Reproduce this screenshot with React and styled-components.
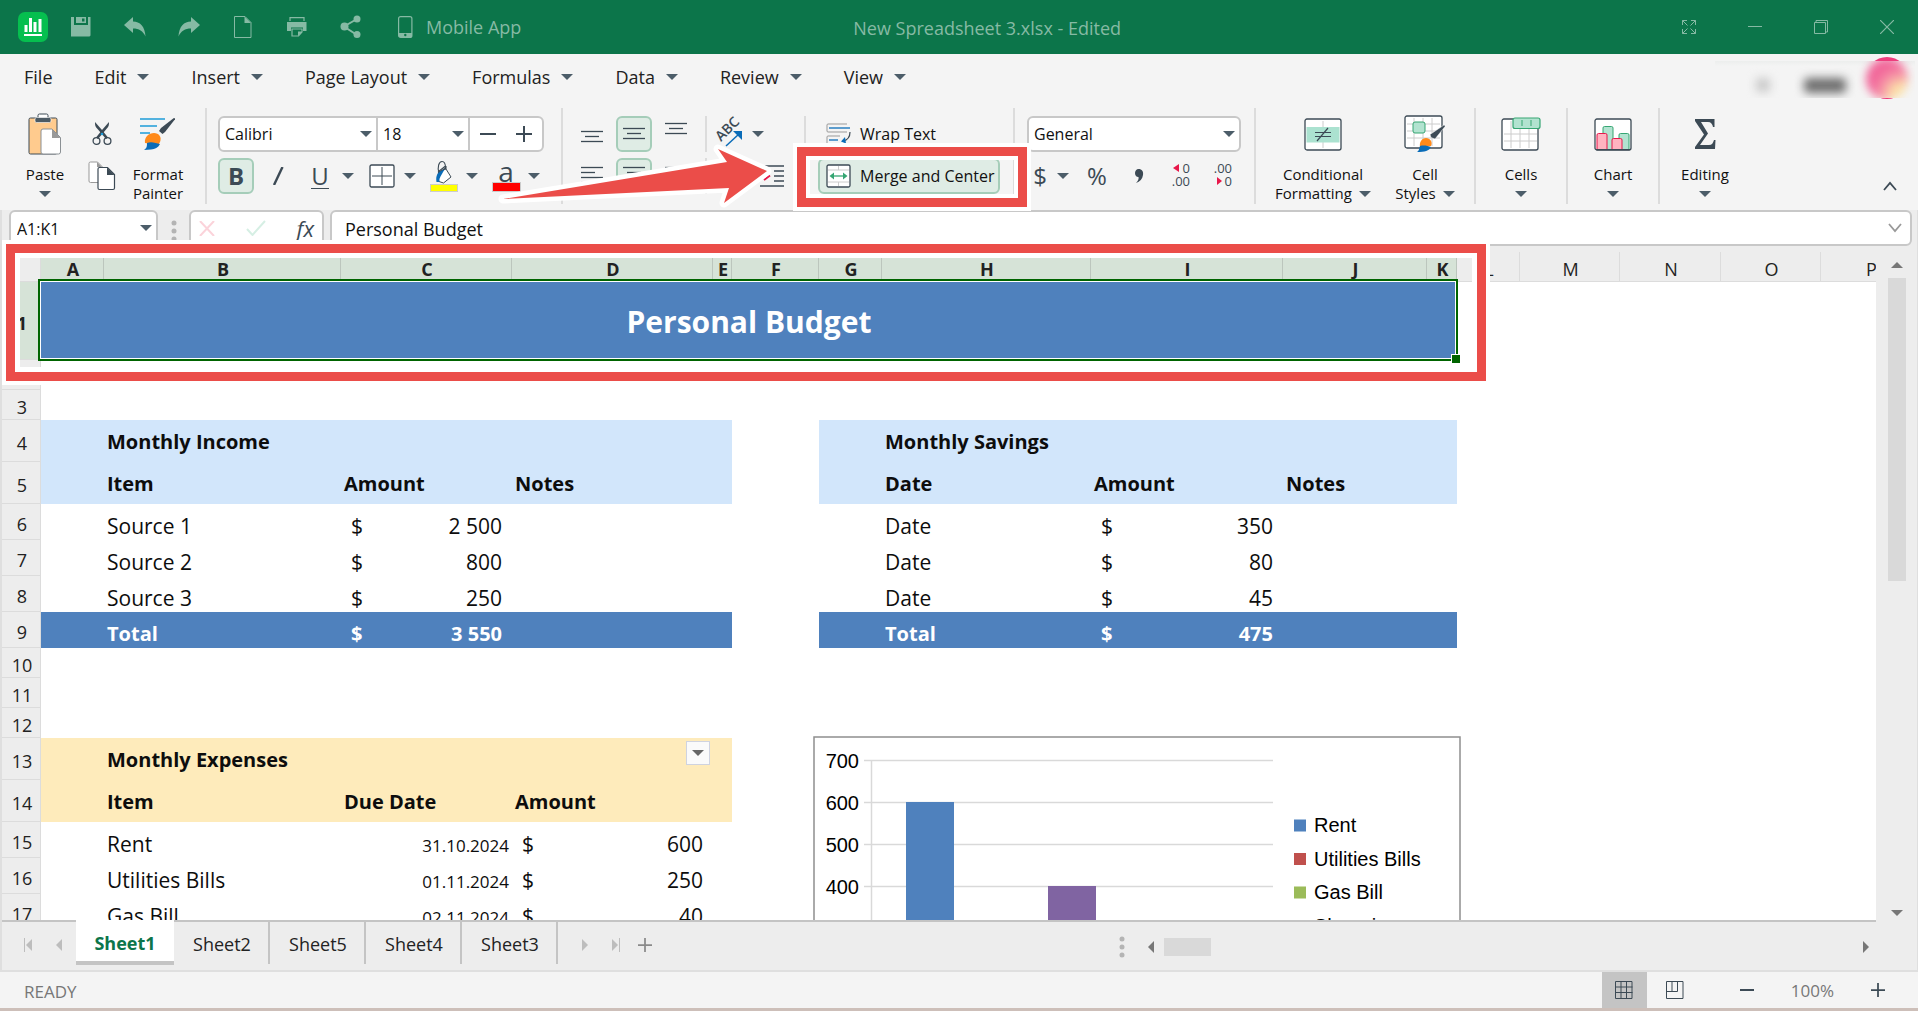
import React from 'react'
import styled, { createGlobalStyle, css } from 'styled-components'

const GlobalStyle = createGlobalStyle`
* {
  box-sizing: border-box;
}

body {
  margin: 0;
  font-family: 'Open Sans', 'Noto Sans', sans-serif;
  font-size: 18px;
  color: #222;
}

button, input, select {
  margin: 0;
  padding: 0;
  border: none;
  background: none;
  font-family: inherit;
  font-size: inherit;
  color: inherit;
  outline: none;
}

svg {
  display: block;
  flex-shrink: 0;
}
`

const Page = styled.div`
display: flex;
flex-direction: column;
height: 100vh;
overflow: hidden;
background-color: #f4f4f4;
`

/* ---------- title bar ---------- */

const TitleBar = styled.header`
display: flex;
align-items: center;
height: 54px;
flex-shrink: 0;
padding: 0 11px 0 18px;
background-color: #0c754a;
color: #86baa4;
`

const QuickTools = styled.div`
display: flex;
align-items: center;
gap: 24px;
padding-left: 18px;
`

const QuickButton = styled.button`
display: flex;
align-items: center;
justify-content: center;
width: 30px;
height: 34px;
`

const MobileLink = styled.a`
display: flex;
align-items: center;
gap: 13px;
padding-left: 8px;
color: inherit;
text-decoration: none;
`

const DocTitle = styled.h1`
flex: 1;
margin: 0;
padding: 2px 216px 0 0;
font-size: 18px;
font-weight: 400;
text-align: center;
`

const WindowButtons = styled.div`
display: flex;
gap: 26px;
`

const WindowButton = styled(QuickButton)`
width: 40px;
`

/* ---------- menu ---------- */

const MenuBar = styled.nav`
display: flex;
align-items: center;
height: 46px;
flex-shrink: 0;
padding-left: 24px;
gap: 42px;
`

const MenuItem = styled.button`
display: flex;
align-items: center;
gap: 11px;
line-height: 28px;
`

const Account = styled.div`
position: relative;
align-self: stretch;
margin-left: auto;
padding: 7px 3px 0 0;
`

const avatarShape = css`
position: absolute;
width: 42px;
height: 42px;
border-radius: 50%;
`

const Avatar = styled.span`
${avatarShape}
top: 3px;
right: 10px;
background-color: #ee3d7d;
`

const Hidden = styled.div`
position: relative;
display: flex;
width: 200px;
height: 37px;
overflow: hidden;
background: linear-gradient(#eceeed, #f4f4f4 5px);
`

const Smudge = styled.span`
width: ${({ wide }) => wide ? '42px' : '14px'};
height: ${({ wide }) => wide ? '15px' : '14px'};
margin: 17px 0 0 ${({ wide }) => wide ? '34px' : '41px'};
border-radius: 4px;
background-color: ${({ wide }) => wide ? '#6e6e6e' : '#c9c9c9'};
filter: blur(5px);
`

const AvatarHaze = styled.span`
${avatarShape}
top: -3px;
right: 7px;
background: radial-gradient(circle at 85% 88%, #fbe3a8 0, #fbdfa8 18%, #f58fa6 42%, #f2699b 60%, #ee5f95 100%);
filter: blur(4px);
`

/* ---------- ribbon ---------- */

const Ribbon = styled.div`
display: flex;
height: 110px;
flex-shrink: 0;
padding-top: 8px;
font-size: 15px;
color: #111;
`

const Group = styled.div`
display: flex;
height: ${({ short }) => short ? '36px' : '96px'};
margin-top: ${({ short }) => short ? '8px' : '0'};
padding: ${({ pad }) => pad || '0'};
gap: ${({ gap }) => gap || '0'};
border-right: ${({ last }) => last ? 'none' : '2px solid #dcdcdc'};
`

const Stack = styled.div`
display: flex;
flex-direction: column;
gap: 6px;
padding-top: 8px;
`

const Line = styled.div`
display: flex;
align-items: center;
gap: 6px;
height: 36px;
`

const Divider = styled.span`
width: 2px;
height: 36px;
margin: 0 -1px 0 5px;
background-color: #dcdcdc;
`

const activeTool = css`
border: 2px solid #a5cdb9;
background-color: #dfece5;
`

const toolWidths = { narrow: '26px', normal: '36px', wide: '60px' }

const ToolButton = styled.button`
display: flex;
align-items: center;
justify-content: center;
width: ${({ size }) => toolWidths[size || 'normal']};
height: 36px;
border-radius: 6px;
flex-shrink: 0;
font-size: 24px;
line-height: 28px;
color: #3c4a55;
${({ active }) => active && activeTool}
`

const BoldMark = styled.b`
font-size: 24px;
font-weight: 700;
`

const Split = styled.div`
display: flex;
`

const CaretButton = styled.button`
display: flex;
align-items: center;
justify-content: center;
width: 20px;
height: 36px;
`

const TallButton = styled.button`
display: flex;
flex-direction: column;
align-items: center;
width: ${({ w }) => w}px;
padding-top: 4px;
line-height: 19px;
`

const TallIcon = styled.span`
display: flex;
align-items: center;
justify-content: center;
height: 44px;
margin-bottom: 9px;
`

const TallCaret = styled.span`
display: flex;
align-items: center;
gap: 7px;
height: 19px;
`

const WideButton = styled.button`
display: flex;
align-items: center;
gap: 9px;
width: 182px;
height: 36px;
padding: ${({ active }) => active ? '0 6px' : '0 8px'};
border-radius: 6px;
font-size: 16px;
white-space: nowrap;
${({ active }) => active && activeTool}
`

const FontFields = styled.div`
display: flex;
width: 326px;
height: 36px;
border: 2px solid #c8c8c8;
border-radius: 6px;
background-color: #fff;
`

const SelectBox = styled.label`
position: relative;
display: flex;
align-items: center;
width: ${({ w }) => w}px;
height: 100%;
border-right: ${({ last }) => last ? 'none' : '2px solid #c8c8c8'};

& > svg {
  position: absolute;
  right: 4px;
  pointer-events: none;
}
`

const Select = styled.select`
width: 100%;
height: 100%;
padding-left: 5px;
appearance: none;
font-size: 16px;
color: #111;
`

const NumberFormat = styled.div`
width: 214px;
height: 36px;
border: 2px solid #c8c8c8;
border-radius: 6px;
background-color: #fff;
`

const StepButton = styled.button`
display: flex;
flex: 1;
align-items: center;
justify-content: center;
`

const CollapseButton = styled.button`
align-self: flex-start;
margin: 73px 21px 0 auto;
`

/* ---------- callouts drawn over the window ---------- */

const MergeAnchor = styled.div`
position: relative;
`

const MergeFrame = styled.span`
position: absolute;
inset: -11px -27px -13px -21px;
border: 9px solid #eb4d49;
box-shadow: 0 0 0 4px #fff, inset 0 0 0 4px #fff;
z-index: 2;
pointer-events: none;
`

const ArrowSvg = styled.svg`
position: absolute;
left: -323px;
top: -18px;
z-index: 2;
pointer-events: none;
`

const RangeFrame = styled.span`
position: absolute;
left: 4px;
top: -2px;
width: 1480px;
height: 137px;
border: 9px solid #eb4d49;
box-shadow: 0 0 0 4px #fff, inset 0 0 0 5px #fff;
z-index: 3;
pointer-events: none;
`

/* ---------- formula bar ---------- */

const Workbook = styled.main`
display: flex;
flex-direction: column;
flex: 1;
min-height: 0;
border-left: 2px solid #dfdfdf;
border-right: 1px solid #dfdfdf;
background-color: #ededed;
`

const FormulaBar = styled.div`
display: flex;
height: 36px;
flex-shrink: 0;
padding: 0 5px 0 7px;
`

const Box = styled.div`
display: flex;
align-items: center;
border: 2px solid #c8c8c8;
border-radius: 6px;
background-color: #fff;
`

const NameBox = styled(Box)`
width: 149px;
padding: 0 4px 0 6px;
`

const FormulaTools = styled(Box)`
justify-content: space-between;
width: 135px;
padding: 0 8px;
`

const FormulaBox = styled(Box)`
flex: 1;
margin-left: 6px;
padding: 0 8px 0 13px;
`

const BoxInput = styled.input`
flex: 1;
min-width: 0;
height: 28px;
padding-top: 1px;
font-size: ${({ small }) => small ? '16px' : '18px'};
color: #111;
`

const Grip = styled.span`
display: flex;
justify-content: center;
padding-top: 10px;
width: 31px;
`

/* ---------- sheet ---------- */

const SheetArea = styled.div`
position: relative;
display: flex;
flex: 1;
min-height: 0;
`

const SheetColumn = styled.div`
display: flex;
flex-direction: column;
flex: 1;
min-width: 0;
`

const Viewport = styled.div`
position: relative;
flex: 1;
min-height: 0;
overflow: hidden;
padding-top: 6px;
`

const Grid = styled.table`
width: 1919px;
table-layout: fixed;
border-collapse: separate;
border-spacing: 0;
background-color: #fff;
font-size: 21px;
color: #0d0d0d;
`

const Row = styled.tr`
height: ${({ h }) => h}px;
`

const HeadCell = styled.th`
padding: 4px 0 0 2px;
font-size: 18px;
line-height: 24px;
font-weight: ${({ picked }) => picked ? 700 : 400};
background-color: ${({ picked }) => picked ? '#d6e3d7' : '#ededed'};
border-right: 1px solid ${({ picked }) => picked ? '#bcc6bd' : '#dcdcdc'};
border-bottom: 1px solid #dcdcdc;
color: #222;
`

const fills = {
  head: '#d2e6fb',
  total: '#4f81bd',
  expense: '#feebbb',
}

const Cell = styled.td`
position: relative;
padding: ${({ middle }) => middle ? '2px' : '0'} ${({ money }) => money ? '10px' : '3px'} 0;
font-size: ${({ strong }) => strong ? '20px' : '21px'};
line-height: 28px;
white-space: nowrap;
vertical-align: ${({ middle }) => middle ? 'middle' : 'bottom'};
font-weight: ${({ strong }) => strong ? 700 : 400};
color: ${({ fill }) => fill === 'total' ? '#fff' : 'inherit'};
background-color: ${({ fill }) => fills[fill] || '#fff'};
`

const TitleCell = styled.td`
position: relative;
padding: 2px 0 0;
background-color: #4f81bd;
color: #fff;
font-size: 30px;
font-weight: 700;
line-height: 42px;
text-align: center;

&::before {
  content: '';
  position: absolute;
  inset: -3px -1px -1px -3px;
  border: 2px solid #006400;
  box-shadow: inset 0 0 0 1px #fff;
  z-index: 1;
}

&::after {
  content: '';
  position: absolute;
  right: -4px;
  bottom: -4px;
  width: 8px;
  height: 8px;
  border: 1px solid #fff;
  background-color: #006400;
  z-index: 1;
}
`

const Money = styled.span`
display: flex;
justify-content: space-between;
`

const DateText = styled.span`
display: block;
font-size: 17px;
line-height: 24px;
text-align: right;
`

const FilterButton = styled.button`
position: absolute;
top: 3px;
right: 3px;
display: flex;
align-items: center;
justify-content: center;
width: 24px;
height: 24px;
border: 1px solid #cfd3e0;
background-color: #fafafa;
`

const ChartSvg = styled.svg`
position: absolute;
left: 811px;
top: 490px;
font-family: 'Liberation Sans', Arial, sans-serif;
font-size: 20px;
`

const ScrollColumn = styled.div`
display: flex;
flex-direction: column;
align-items: center;
width: 41px;
padding: 16px 0 54px;
`

const VThumb = styled.div`
width: 18px;
height: 303px;
margin: 10px 0 auto;
background-color: #d9d9d9;
`

/* ---------- sheet tabs ---------- */

const TabBar = styled.div`
display: flex;
align-items: flex-start;
height: 50px;
flex-shrink: 0;
border-top: 2px solid #c4c4c4;
`

const TabNav = styled.div`
display: flex;
align-items: center;
height: 46px;
padding: 0 ${({ start }) => start ? '2px 0 12px' : '0 0 12px'};
`

const NavButton = styled.button`
display: flex;
align-items: center;
justify-content: center;
width: 30px;
height: 30px;
`

const Tab = styled.button`
width: 96px;
height: 42px;
padding: 2px 0 0 2px;
border-right: 2px solid #c4c4c4;
color: #222;
${({ active }) => active && css`
width: 98px;
height: 45px;
margin-top: -2px;
padding: 5px 0 0;
border-right: none;
border-bottom: 4px solid #c4c4c4;
background-color: #fff;
color: #0c754a;
font-weight: 700;
`}
`

const HScroll = styled.div`
display: flex;
align-items: center;
width: 757px;
height: 50px;
margin-left: auto;
padding-right: 4px;
`

const ScrollLeft = styled.button`
margin: 0 7px 0 20px;
`

const HThumb = styled.div`
width: 47px;
height: 18px;
margin-right: auto;
background-color: #d9d9d9;
`

const StatusBar = styled.footer`
display: flex;
align-items: center;
height: 41px;
flex-shrink: 0;
padding-right: 33px;
border-top: 2px solid #dfdfdf;
border-bottom: 3px solid #cdbfb9;
`

const Ready = styled.span`
flex: 1;
padding: 2px 0 0 24px;
font-size: 17px;
color: #777;
`

const ViewButton = styled.button`
display: flex;
align-items: center;
justify-content: center;
width: 45px;
height: 36px;
margin-right: 6px;
background-color: ${({ active }) => active ? '#c4c4c4' : 'transparent'};
`

const Zoom = styled.div`
display: flex;
align-items: center;
gap: 37px;
padding-left: 36px;
font-size: 17px;
color: #777;
`

/* ---------- icons ---------- */

const INK = '#3c4a55'

const Caret = ({ size = 12, color = '#4c5d69' }) => (
  <svg width={size} height={size / 2} viewBox="0 0 12 6"><path d="M0 0h12L6 6z" fill={color} /></svg>
)

const Triangle = ({ dir, bar, color = '#bdbdbd' }) => (
  <svg width="12" height="16" viewBox="0 0 12 16" transform={dir === 'right' ? 'scale(-1 1)' : undefined}>
    <path d="M9 2v12L3 8z" fill={color} />
    {bar && <path d="M1.5 1v14" stroke={color} strokeWidth="1" />}
  </svg>
)

const Dots = () => (
  <svg width="6" height="22" viewBox="0 0 6 22" fill="#b4b4b4">
    <circle cx="3" cy="3" r="2.5" /><circle cx="3" cy="11" r="2.5" /><circle cx="3" cy="19" r="2.5" />
  </svg>
)

const Plus = ({ size = 16, color = INK, w = 2 }) => (
  <svg width={size} height={size} viewBox="0 0 16 16"><path d="M8 0v16M0 8h16" stroke={color} strokeWidth={w} /></svg>
)

const Minus = ({ size = 16 }) => (
  <svg width={size} height="16" viewBox="0 0 16 16" preserveAspectRatio="none"><path d="M0 8h16" stroke={INK} strokeWidth="2" /></svg>
)

const Logo = () => (
  <svg width="30" height="30" viewBox="0 0 30 30">
    <rect width="30" height="30" rx="7" fill="#06bf4f" />
    <path d="M8 13v7M12.500 6v14M17 10v10M22 7v13" stroke="#fff" strokeWidth="3" />
    <path d="M6 23h18" stroke="#fff" strokeWidth="2" />
  </svg>
)

const SaveIcon = () => (
  <svg width="20" height="20" viewBox="0 0 20 20" fill="currentColor">
    <path d="M0 0h3v8h14V0h2.500v18.500l-1 1H0z" /><path d="M5 0h10v6H5zM11 1.500v3h2.500v-3z" fillRule="evenodd" />
  </svg>
)

const UndoIcon = ({ flip }) => (
  <svg width="22" height="20" viewBox="0 0 22 20" transform={flip ? 'scale(-1 1)' : undefined}>
    <path d="M0 8 9 0v4.500c7 0 12 5 12.500 15C19 14 15 11.500 9 11.500V16z" fill="currentColor" />
  </svg>
)

const NewIcon = () => (
  <svg width="18" height="22" viewBox="0 0 18 22">
    <path d="M.5.500h10.500l6 6v15H.5z" fill="none" stroke="currentColor" /><path d="M10.500.500l6.500 6.500h-6.500z" fill="currentColor" />
  </svg>
)

const PrintIcon = () => (
  <svg width="20" height="20" viewBox="0 0 20 20">
    <path d="M3 4V.600h14V4" fill="none" stroke="currentColor" strokeWidth="1.200" />
    <path d="M0 5h19.500v9H16v-3.500H4V14H0z" fill="currentColor" />
    <path d="M5 12h10v3l-3.500 4H5z" fill="none" stroke="currentColor" strokeWidth="1.200" /><path d="M15 14.500l-4 4.500v-4.500z" fill="currentColor" />
  </svg>
)

const ShareIcon = () => (
  <svg width="22" height="24" viewBox="0 0 22 24">
    <path d="M17 4 4 11.500 17 20" fill="none" stroke="currentColor" strokeWidth="2" />
    <g fill="currentColor"><circle cx="17" cy="4" r="3.500" /><circle cx="4.500" cy="11.500" r="4" /><circle cx="17" cy="19.500" r="3.500" /></g>
  </svg>
)

const PhoneIcon = () => (
  <svg width="15" height="22" viewBox="0 0 15 22">
    <rect x=".6" y=".6" width="13.300" height="20.800" rx="2" fill="none" stroke="currentColor" strokeWidth="1.200" />
    <path d="M1 17h13v4H1z" fill="currentColor" /><circle cx="7.300" cy="19" r="1.200" fill="#0c754a" />
  </svg>
)

const ExpandIcon = () => (
  <svg width="14" height="14" viewBox="0 0 14 14" fill="none" stroke="currentColor">
    <path d="M.5 5V.500H5M9 .500h4.500V5M13.500 9v4.500H9M5 13.500H.5V9M.5.500l5 5M13.500.500l-5 5M13.500 13.500l-5-5M.5 13.500l5-5" />
  </svg>
)

const RestoreIcon = () => (
  <svg width="14" height="14" viewBox="0 0 14 14" fill="none" stroke="currentColor">
    <path d="M.5 2.500h11v11H.5zM2 2.500v-2h11.500V12h-2" />
  </svg>
)

const CloseIcon = () => (
  <svg width="14" height="14" viewBox="0 0 14 14"><path d="M0 0l14 14M14 0 0 14" stroke="currentColor" strokeWidth="1.200" /></svg>
)

const PasteIcon = () => (
  <svg width="34" height="42" viewBox="0 0 34 42">
    <rect x="1" y="5" width="28" height="36" rx="1.500" fill="#ffcb8e" stroke={INK} />
    <path d="M10 5V2.500Q10 1 11.500 1h7Q20 1 20 2.500V5" fill="#fff" stroke={INK} />
    <rect x="7" y="4.500" width="16" height="5" rx="1.500" fill="#4c5a64" stroke="#fff" strokeWidth=".6" />
    <path d="M13 18q0-2 2-2h9l8.500 8.500V39q0 2-2 2H15q-2 0-2-2z" fill="#fff" stroke="#8b9094" />
    <path d="M24 16l8.500 9H24z" fill="#999" />
  </svg>
)

const CutIcon = () => (
  <svg width="20" height="24" viewBox="0 0 20 24">
    <path d="M3 0c0 4 .500 5 3 7.500L14 17l2-1.500L10 8z" fill={INK} /><path d="M17 0c0 4-.5 5-3 7.500L6 17l-2-1.500L10 8z" fill={INK} />
    <circle cx="10" cy="12" r="1.300" fill="#1e9cd8" />
    <circle cx="4.500" cy="19" r="3.400" fill="none" stroke={INK} strokeWidth="1.300" /><circle cx="15.500" cy="19" r="3.400" fill="none" stroke={INK} strokeWidth="1.300" />
  </svg>
)

const CopyIcon = () => (
  <svg width="28" height="30" viewBox="0 0 28 30">
    <path d="M1 2.500Q1 1 2.500 1h7l5 5v15.500H2.500Q1 21.500 1 20z" fill="#fff" stroke="#999" /><path d="M9 1l5 5H9z" fill="#999" />
    <path d="M10 8q0-1.500 1.500-1.500h8l7 7V27q0 1.500-1.500 1.500H11.500Q10 28.500 10 27z" fill="#fff" stroke={INK} strokeWidth="1.200" />
    <path d="M19 6.500l7.500 7.500H19z" fill={INK} />
  </svg>
)

const PainterIcon = () => (
  <svg width="36" height="34" viewBox="0 0 36 34">
    <path d="M0 2h25M0 9h17M0 16h10" stroke="#1e9cd8" strokeWidth="1.300" />
    <path d="M33.500 1.200q1.500-.5 1.500 1L25 15l-2.500 2-3.500-3 2-3z" fill={INK} />
    <path d="M5 26c-1-6 4-10 9-10 5 0 8 4 6 9-1 2-2 3-2 3z" fill="#ff8a1b" />
    <path d="M4 33c3-2 3-4 3-7 4-2 9 0 13 1-2 4-5 5-9 5.500z" fill="#0a6cb8" />
  </svg>
)

const BordersIcon = () => (
  <svg width="26" height="24" viewBox="0 0 26 24">
    <rect x="1" y="1" width="24" height="22" rx="1.500" fill="#fff" stroke={INK} strokeWidth="1.300" />
    <path d="M3 12h20M13 3v18" stroke={INK} />
  </svg>
)

const FillIcon = () => (
  <svg width="28" height="33" viewBox="0 0 28 33">
    <path d="M8.500 12 16 9l5 8-7.500 6-6-2z" fill="#fff" stroke={INK} />
    <path d="M9 13C7 7 9 1.500 12 1.500c2.500 0 3.500 3 3.500 6.500L9 13M8 12l7.500-6M16 9V6" fill="none" stroke={INK} strokeWidth="1.100" />
    <path d="M6.500 22c-1-7 1-10 8-12.500l-4 7q-1.500 2-1 5.500z" fill="#0a6cb8" />
    <rect x=".5" y="24.500" width="27" height="7" fill="#ff0" stroke="#ccc" />
  </svg>
)

const FontColorMark = styled.span`
display: flex;
flex-direction: column;
align-items: center;
font-size: 28px;
font-weight: 500;
line-height: 22px;

&::after {
  content: '';
  width: 27px;
  height: 8px;
  border: 1px solid #ccc;
  background-color: #f00;
}
`

// widths of the text lines, top to bottom, at 5px pitch
const LinesIcon = ({ rows, side = 'middle', top = 0 }) => (
  <svg width="22" height="24" viewBox="0 0 22 24">
    {rows.map((w, i) => {
      const x = side === 'left' ? 0 : side === 'right' ? 22 - w : (22 - w) / 2
      return <path key={i} d={`M${x} ${top + 1.5 + i * 5}h${w}`} stroke={INK} strokeWidth="1.300" />
    })}
  </svg>
)

const IndentIcon = ({ back }) => (
  <svg width="24" height="24" viewBox="0 0 24 24">
    <path d="M0 2h24M14 7h10M14 12h10M14 17h10M0 22h24" stroke={INK} strokeWidth="1.300" />
    <path d={back ? 'M12 12H2M6 8l-4 4 4 4' : 'M4 16l6-4.500'} fill="none" stroke="#e8174a" strokeWidth="2" />
  </svg>
)

const OrientIcon = () => (
  <svg width="36" height="36" viewBox="0 0 36 36">
    <text x="0" y="0" transform="translate(9 26) rotate(-45)" fontSize="14" fontWeight="600" fill={INK}>ABC</text>
    <path d="M14 30 27 18" stroke="#0a6cb8" strokeWidth="1.500" /><path d="M21 15h9v9z" fill="#0a6cb8" />
  </svg>
)

const WrapIcon = () => (
  <svg width="25" height="22" viewBox="0 0 25 22" fill="none">
    <path d="M21 1H2Q1 1 1 2v6q0 1 1 1h19" stroke="#999" /><path d="M3 5h21" stroke="#0a6cb8" strokeWidth="1.300" />
    <path d="M14 13H2q-1 0-1 1v6q0 1 1 1h12" stroke="#999" /><path d="M3 17h9" stroke="#0a6cb8" strokeWidth="1.300" />
    <path d="M24 9c0 5-2 8-7 9" stroke={INK} strokeWidth="1.200" /><path d="M19 14l-4 4.500 5 2z" fill="#0a6cb8" />
  </svg>
)

const MergeIcon = () => (
  <svg width="25" height="24" viewBox="0 0 25 24">
    <rect x="1" y="1" width="23" height="22" rx="1.500" fill="#fff" stroke={INK} strokeWidth="1.300" />
    <path d="M2 6h21M2 18h21M12.500 2v4M12.500 18v4" stroke="#ccc" />
    <path d="M5 12h15" stroke="#36a673" strokeWidth="1.300" /><path d="M8 8.500v7L3.500 12zM17 8.500v7l4.500-3.500z" fill="#36a673" />
  </svg>
)

const DecimalIcon = ({ more }) => (
  <svg width="20" height="26" viewBox="0 0 20 26" fontSize="13" fontWeight="500" fill={INK}>
    {more && <path d="M8 1v8L2 5z" fill="#e8174a" />}
    {!more && <path d="M4 14v8l5-4z" fill="#e8174a" />}
    <text x="19" y="10" textAnchor="end">{more ? '0' : '.00'}</text>
    <text x="19" y="23" textAnchor="end">{more ? '.00' : '0'}</text>
  </svg>
)

const CommaIcon = () => (
  <svg width="12" height="16" viewBox="0 0 12 16"><path d="M5.500 1C9 1 10.500 3.500 10 7c-.5 4-3 6.500-7 8 2-2 3-4 2.500-6C3 9 2 7 2 5s1.500-4 3.500-4z" fill={INK} /></svg>
)

const ConditionalIcon = () => (
  <svg width="38" height="33" viewBox="0 0 38 33">
    <rect x="1" y="1" width="36" height="31" rx="2" fill="#fff" stroke={INK} strokeWidth="1.300" />
    <path d="M19 3v27" stroke="#ccc" /><rect x="2.500" y="9" width="33" height="15.500" fill="#abe2d0" />
    <path d="M11 14.500h16M11 18.500h16M13 23l11-13" stroke={INK} strokeWidth="1.200" />
  </svg>
)

const CellStylesIcon = () => (
  <svg width="42" height="38" viewBox="0 0 42 38">
    <rect x="1" y="1" width="37" height="32" rx="2" fill="#fff" stroke={INK} strokeWidth="1.300" />
    <path d="M3 9h33M3 16h33M3 23h33M10 3v28M19 3v28M28 3v28" stroke="#ccc" />
    <rect x="9" y="7" width="12" height="11" rx="2" fill="#b2e3d0" stroke="#36a673" />
    <path d="M40 10q1.500 0 1 1.500L31 24l-4-1.500-1-3z" fill={INK} stroke="#fff" strokeWidth=".5" />
    <path d="M16 32c-1-5 2-9 6-9s7 4 5 8z" fill="#ff8a1b" />
    <path d="M13 37c2-1 2-3 3-6 4-1 8 0 11 1-2 4-6 5-14 5z" fill="#0a6cb8" />
  </svg>
)

const CellsIcon = () => (
  <svg width="40" height="35" viewBox="0 0 40 35">
    <rect x="1" y="2" width="36" height="31" rx="2" fill="#fff" stroke={INK} strokeWidth="1.300" />
    <path d="M3 17h33M3 24h33M10 4v27M19 4v27M28 4v27" stroke="#ccc" />
    <rect x="12" y="1" width="27" height="10.500" rx="2" fill="#b2e3d0" stroke="#36a673" strokeWidth="1.200" />
    <path d="M21 3v6M30 3v6" stroke="#36a673" />
  </svg>
)

const ChartIcon = () => (
  <svg width="38" height="33" viewBox="0 0 38 33">
    <rect x="1" y="1" width="36" height="31" rx="2" fill="#fff" stroke={INK} strokeWidth="1.300" />
    <path d="M9 31V10q0-1.500 1.500-1.500h7Q19 8.500 19 10v21M25 31V17q0-1.500 1.500-1.500h7Q35 15.500 35 17v14" fill="#b2e3d0" stroke="#36a673" />
    <path d="M3 31V17q0-1.500 1.500-1.500h7Q13 15.500 13 17v14M18 31v-9q0-1.500 1.500-1.500h7Q28 20.500 28 22v9" fill="#ffb3c0" stroke="#e8174a" />
    <path d="M2 31.700h34" stroke={INK} strokeWidth="1.300" />
  </svg>
)

const SumIcon = () => (
  <svg width="21" height="30" viewBox="0 0 21 30">
    <path d="M0 0h19.500v8H18c-.5-3-2-5-5-5H6l7 11.500L5 26h9c3 0 4-2 5-5h1.500L20 30H0v-2l9-12.500L0 2z" fill={INK} />
  </svg>
)

const Chevron = ({ down, color = INK }) => (
  <svg width="14" height="10" viewBox="0 0 14 10"><path d={down ? 'M1 1l6 7 6-7' : 'M1 9l6-7 6 7'} fill="none" stroke={color} strokeWidth="1.800" /></svg>
)

const CrossIcon = () => (
  <svg width="16" height="15" viewBox="0 0 16 15"><path d="M1 0l14 15M15 0 1 15" stroke="#fbd3da" strokeWidth="2" /></svg>
)

const CheckIcon = () => (
  <svg width="20" height="16" viewBox="0 0 20 16"><path d="M1 9l5.500 6L19 1" fill="none" stroke="#d6efe4" strokeWidth="2" /></svg>
)

const FxMark = styled.i`
font-size: 22px;
line-height: 28px;
color: #3c4a55;
`

const SlashMark = () => (
  <svg width="12" height="18" viewBox="0 0 12 18"><path d="M10.500 0 2 18" stroke={INK} strokeWidth="2.400" /></svg>
)

const UnderMark = styled.span`
border-bottom: 1px solid #3c4a55;
line-height: 24px;
`

const GridViewIcon = () => (
  <svg width="18" height="18" viewBox="0 0 18 18" fill="none" stroke={INK}><path d="M.5.500h16.500v17H.5zM6 .500v17M11.500.500v17M.5 6h17M.5 11.500h17" /></svg>
)

const PageViewIcon = () => (
  <svg width="18" height="18" viewBox="0 0 18 18" fill="none" stroke={INK}><path d="M.5.500h16.500v17H.5zM6 .500v10M11.500.500v10M.5 10.500h11" /></svg>
)

/* ---------- data ---------- */

const menus = ['File', 'Edit', 'Insert', 'Page Layout', 'Formulas', 'Data', 'Review', 'View']

const columns = [
  ['A', 63], ['B', 237], ['C', 171], ['D', 201], ['E', 19], ['F', 87], ['G', 63], ['H', 209],
  ['I', 192], ['J', 144], ['K', 30], ['L', 63], ['M', 100], ['N', 101], ['O', 100], ['P', 100],
]

const rows = [
  { n: 2, h: 30 },
  { n: 3, h: 30 },
  { n: 4, h: 42, left: 'head', right: 'head', strong: true, cells: { B: 'Monthly Income', H: 'Monthly Savings' } },
  { n: 5, h: 42, left: 'head', right: 'head', strong: true, cells: { B: 'Item', C: 'Amount', D: 'Notes', H: 'Date', I: 'Amount', J: 'Notes' } },
  { n: 6, h: 36, cells: { B: 'Source 1', C: ['2 500'], H: 'Date', I: ['350'] } },
  { n: 7, h: 36, cells: { B: 'Source 2', C: ['800'], H: 'Date', I: ['80'] } },
  { n: 8, h: 36, cells: { B: 'Source 3', C: ['250'], H: 'Date', I: ['45'] } },
  { n: 9, h: 36, left: 'total', right: 'total', strong: true, cells: { B: 'Total', C: ['3 550'], H: 'Total', I: ['475'] } },
  { n: 10, h: 30 },
  { n: 11, h: 30 },
  { n: 12, h: 30 },
  { n: 13, h: 42, left: 'expense', strong: true, filter: true, cells: { B: 'Monthly Expenses' } },
  { n: 14, h: 42, left: 'expense', strong: true, cells: { B: 'Item', C: 'Due Date', D: 'Amount' } },
  { n: 15, h: 36, cells: { B: 'Rent', C: { date: '31.10.2024' }, D: ['600'] } },
  { n: 16, h: 36, cells: { B: 'Utilities Bills', C: { date: '01.11.2024' }, D: ['250'] } },
  { n: 17, h: 36, cells: { B: 'Gas Bill', C: { date: '02.11.2024' }, D: ['40'] } },
]

const legend = [
  ['Rent', '#4f81bd'],
  ['Utilities Bills', '#c0504d'],
  ['Gas Bill', '#9bbb59'],
  ['Shopping', '#8064a2'],
]

const renderValue = (value) => {
  if (Array.isArray(value)) return <Money><span>$</span><span>{value[0]}</span></Money>
  if (value && value.date) return <DateText>{value.date}</DateText>
  return value
}

const SheetRow = ({ row }) => (
  <Row h={row.h}>
    <HeadCell scope="row">{row.n}</HeadCell>
    {columns.map(([name], i) => {
      const value = row.cells && row.cells[name]
      const fill = i < 5 ? row.left : i > 5 && i < 11 ? row.right : undefined
      return (
        <Cell key={name} fill={fill} strong={row.strong} middle={row.h === 42} money={Array.isArray(value)}>
          {renderValue(value)}
          {row.filter && name === 'D' && <FilterButton aria-label="Filter"><Caret color="#666" /></FilterButton>}
        </Cell>
      )
    })}
  </Row>
)

const BudgetChart = () => (
  <ChartSvg width="649" height="300" viewBox="0 0 649 300">
    <rect x="1" y="1" width="646" height="320" fill="#fff" stroke="#8f8f8f" strokeWidth="1.500" />
    {[700, 600, 500, 400, 300].map((value, i) => (
      <g key={value}>
        <path d={`M51 ${24.5 + i * 42}h409`} stroke="#d9d9d9" strokeWidth="1.500" />
        <text x="46" y={32 + i * 42} textAnchor="end">{value}</text>
      </g>
    ))}
    <path d="M58.500 24v280" stroke="#d9d9d9" strokeWidth="1.500" />
    <rect x="93" y="66" width="48" height="240" fill="#4f81bd" />
    <rect x="235" y="150" width="48" height="160" fill="#8064a2" />
    {legend.map(([label, color], i) => (
      <g key={label}>
        <rect x="481" y={83.5 + i * 33.5} width="12" height="12" fill={color} />
        <text x="501" y={96 + i * 33.5}>{label}</text>
      </g>
    ))}
  </ChartSvg>
)

const SplitTool = ({ label, size, children }) => (
  <Split>
    <ToolButton size={size} aria-label={label}>{children}</ToolButton>
    <CaretButton aria-label={`${label} options`}><Caret /></CaretButton>
  </Split>
)

const TopBar = () => (
  <TitleBar>
    <Logo />
    <QuickTools>
      <QuickButton aria-label="Save"><SaveIcon /></QuickButton>
      <QuickButton aria-label="Undo"><UndoIcon /></QuickButton>
      <QuickButton aria-label="Redo"><UndoIcon flip /></QuickButton>
      <QuickButton aria-label="New"><NewIcon /></QuickButton>
      <QuickButton aria-label="Print"><PrintIcon /></QuickButton>
      <QuickButton aria-label="Share"><ShareIcon /></QuickButton>
      <MobileLink href="#mobile"><PhoneIcon />Mobile App</MobileLink>
    </QuickTools>
    <DocTitle>New Spreadsheet 3.xlsx - Edited</DocTitle>
    <WindowButtons>
      <WindowButton aria-label="Full screen"><ExpandIcon /></WindowButton>
      <WindowButton aria-label="Minimize">
        <svg width="14" height="14" viewBox="0 0 14 14"><path d="M0 6.500h14" stroke="currentColor" /></svg>
      </WindowButton>
      <WindowButton aria-label="Restore"><RestoreIcon /></WindowButton>
      <WindowButton aria-label="Close"><CloseIcon /></WindowButton>
    </WindowButtons>
  </TitleBar>
)

const RibbonBar = () => (
  <Ribbon>
    <Group pad="0 21px 0 18px">
      <TallButton w={54}><TallIcon><PasteIcon /></TallIcon>Paste<TallCaret><Caret /></TallCaret></TallButton>
      <Stack>
        <ToolButton size="wide" aria-label="Cut"><CutIcon /></ToolButton>
        <ToolButton size="wide" aria-label="Copy"><CopyIcon /></ToolButton>
      </Stack>
      <TallButton w={52}><TallIcon><PainterIcon /></TallIcon>Format<br />Painter</TallButton>
    </Group>

    <Group pad="0 17px 0 11px">
      <Stack>
        <FontFields>
          <SelectBox w={158}><Select aria-label="Font"><option>Calibri</option></Select><Caret /></SelectBox>
          <SelectBox w={92}><Select aria-label="Font size"><option>18</option></Select><Caret /></SelectBox>
          <StepButton aria-label="Smaller"><Minus /></StepButton>
          <StepButton aria-label="Larger"><Plus /></StepButton>
        </FontFields>
        <Line>
          <ToolButton active aria-label="Bold"><BoldMark>B</BoldMark></ToolButton>
          <ToolButton aria-label="Italic"><SlashMark /></ToolButton>
          <SplitTool label="Underline"><UnderMark>U</UnderMark></SplitTool>
          <SplitTool label="Borders"><BordersIcon /></SplitTool>
          <SplitTool label="Fill color"><FillIcon /></SplitTool>
          <SplitTool label="Font color"><FontColorMark>a</FontColorMark></SplitTool>
        </Line>
      </Stack>
    </Group>

    <Group last pad="0 0 0 11px">
      <Stack>
        <Line>
          <ToolButton aria-label="Align bottom"><LinesIcon rows={[22, 14, 22]} top={8} /></ToolButton>
          <ToolButton active aria-label="Align middle"><LinesIcon rows={[22, 14, 22]} top={5} /></ToolButton>
          <ToolButton aria-label="Align top"><LinesIcon rows={[22, 14, 22]} /></ToolButton>
          <Divider />
          <SplitTool label="Orientation"><OrientIcon /></SplitTool>
        </Line>
        <Line>
          <ToolButton aria-label="Align left"><LinesIcon rows={[22, 14, 22, 14]} side="left" top={2} /></ToolButton>
          <ToolButton active aria-label="Align center"><LinesIcon rows={[22, 14, 22, 14]} top={2} /></ToolButton>
          <ToolButton aria-label="Align right"><LinesIcon rows={[22, 14, 22, 14]} side="right" top={2} /></ToolButton>
          <Divider />
          <ToolButton aria-label="Decrease indent"><IndentIcon back /></ToolButton>
          <ToolButton aria-label="Increase indent"><IndentIcon /></ToolButton>
        </Line>
      </Stack>
    </Group>
    <Group short pad="0 0 0 14px" />

    <Group pad="0 13px 0 12px">
      <Stack>
        <WideButton><WrapIcon />Wrap Text</WideButton>
        <MergeAnchor>
          <WideButton active><MergeIcon />Merge and Center</WideButton>
          <ArrowSvg width="285" height="75" viewBox="0 0 285 75">
            <path d="M8 59 232 22 223 9 272 31 229 63 234 48z" fill="#eb4d49" stroke="#fff" strokeWidth="9" strokeLinejoin="round" paintOrder="stroke" />
          </ArrowSvg>
          <MergeFrame />
        </MergeAnchor>
      </Stack>
    </Group>

    <Group pad="0 13px 0 12px">
      <Stack>
        <NumberFormat>
          <SelectBox w={210} last><Select aria-label="Number format"><option>General</option></Select><Caret /></SelectBox>
        </NumberFormat>
        <Line>
          <SplitTool label="Currency" size="narrow">$</SplitTool>
          <ToolButton>%</ToolButton>
          <ToolButton aria-label="Comma style"><CommaIcon /></ToolButton>
          <ToolButton aria-label="Increase decimal"><DecimalIcon more /></ToolButton>
          <ToolButton aria-label="Decrease decimal"><DecimalIcon /></ToolButton>
        </Line>
      </Stack>
    </Group>

    <Group pad="0 15px 0 13px" gap="14px">
      <TallButton w={108}><TallIcon><ConditionalIcon /></TallIcon>Conditional<TallCaret>Formatting <Caret /></TallCaret></TallButton>
      <TallButton w={68}><TallIcon><CellStylesIcon /></TallIcon>Cell<TallCaret>Styles <Caret /></TallCaret></TallButton>
    </Group>
    <Group><TallButton w={90}><TallIcon><CellsIcon /></TallIcon>Cells<TallCaret><Caret /></TallCaret></TallButton></Group>
    <Group><TallButton w={90}><TallIcon><ChartIcon /></TallIcon>Chart<TallCaret><Caret /></TallCaret></TallButton></Group>
    <Group last><TallButton w={90}><TallIcon><SumIcon /></TallIcon>Editing<TallCaret><Caret /></TallCaret></TallButton></Group>
    <CollapseButton aria-label="Collapse ribbon"><Chevron /></CollapseButton>
  </Ribbon>
)

const App = () => (
  <Page>
    <GlobalStyle />
    <TopBar />
    <MenuBar>
      {menus.map((name, i) => <MenuItem key={name}>{name}{i > 0 && <Caret />}</MenuItem>)}
      <Account>
        <Avatar />
        <Hidden><Smudge /><Smudge wide /><AvatarHaze /></Hidden>
      </Account>
    </MenuBar>
    <RibbonBar />

    <Workbook>
      <FormulaBar>
        <NameBox>
          <BoxInput small aria-label="Name box" defaultValue="A1:K1" />
          <button aria-label="Named ranges"><Caret /></button>
        </NameBox>
        <Grip><Dots /></Grip>
        <FormulaTools>
          <button aria-label="Cancel"><CrossIcon /></button>
          <button aria-label="Enter"><CheckIcon /></button>
          <button aria-label="Insert function"><FxMark>fx</FxMark></button>
        </FormulaTools>
        <FormulaBox>
          <BoxInput aria-label="Formula" defaultValue="Personal Budget" />
          <button aria-label="Expand formula bar"><Chevron down color="#999" /></button>
        </FormulaBox>
      </FormulaBar>

      <SheetArea>
        <RangeFrame />
        <SheetColumn>
          <Viewport>
            <Grid>
              <colgroup>
                <col width="39" />
                {columns.map(([name, w]) => <col key={name} width={w} />)}
              </colgroup>
              <thead>
                <Row h={30}>
                  <HeadCell aria-label="Select all" />
                  {columns.map(([name], i) => <HeadCell key={name} scope="col" picked={i < 11}>{name}</HeadCell>)}
                </Row>
              </thead>
              <tbody>
                <Row h={78}>
                  <HeadCell scope="row" picked>1</HeadCell>
                  <TitleCell colSpan={11}>Personal Budget</TitleCell>
                  <Cell colSpan={5} />
                </Row>
                {rows.map((row) => <SheetRow key={row.n} row={row} />)}
              </tbody>
            </Grid>
            <BudgetChart />
          </Viewport>

          <TabBar>
            <TabNav start>
              <NavButton aria-label="First sheet"><Triangle bar /></NavButton>
              <NavButton aria-label="Previous sheet"><Triangle /></NavButton>
            </TabNav>
            <Tab active>Sheet1</Tab>
            <Tab>Sheet2</Tab>
            <Tab>Sheet5</Tab>
            <Tab>Sheet4</Tab>
            <Tab>Sheet3</Tab>
            <TabNav>
              <NavButton aria-label="Next sheet"><Triangle dir="right" /></NavButton>
              <NavButton aria-label="Last sheet"><Triangle dir="right" bar /></NavButton>
              <NavButton aria-label="Add sheet"><Plus size={14} color="#8a8a8a" /></NavButton>
            </TabNav>
            <HScroll>
              <Dots />
              <ScrollLeft aria-label="Scroll left"><Triangle color="#777" /></ScrollLeft>
              <HThumb />
              <button aria-label="Scroll right"><Triangle dir="right" color="#777" /></button>
            </HScroll>
          </TabBar>
        </SheetColumn>
        <ScrollColumn>
          <svg width="12" height="6" viewBox="0 0 12 6"><path d="M0 6h12L6 0z" fill="#777" /></svg>
          <VThumb />
          <Caret color="#777" />
        </ScrollColumn>
      </SheetArea>
    </Workbook>

    <StatusBar>
      <Ready>READY</Ready>
      <ViewButton active aria-label="Normal view"><GridViewIcon /></ViewButton>
      <ViewButton aria-label="Page layout view"><PageViewIcon /></ViewButton>
      <Zoom>
        <button aria-label="Zoom out"><Minus size={14} /></button>
        <span>100%</span>
        <button aria-label="Zoom in"><Plus size={14} /></button>
      </Zoom>
    </StatusBar>
  </Page>
)

export default App
